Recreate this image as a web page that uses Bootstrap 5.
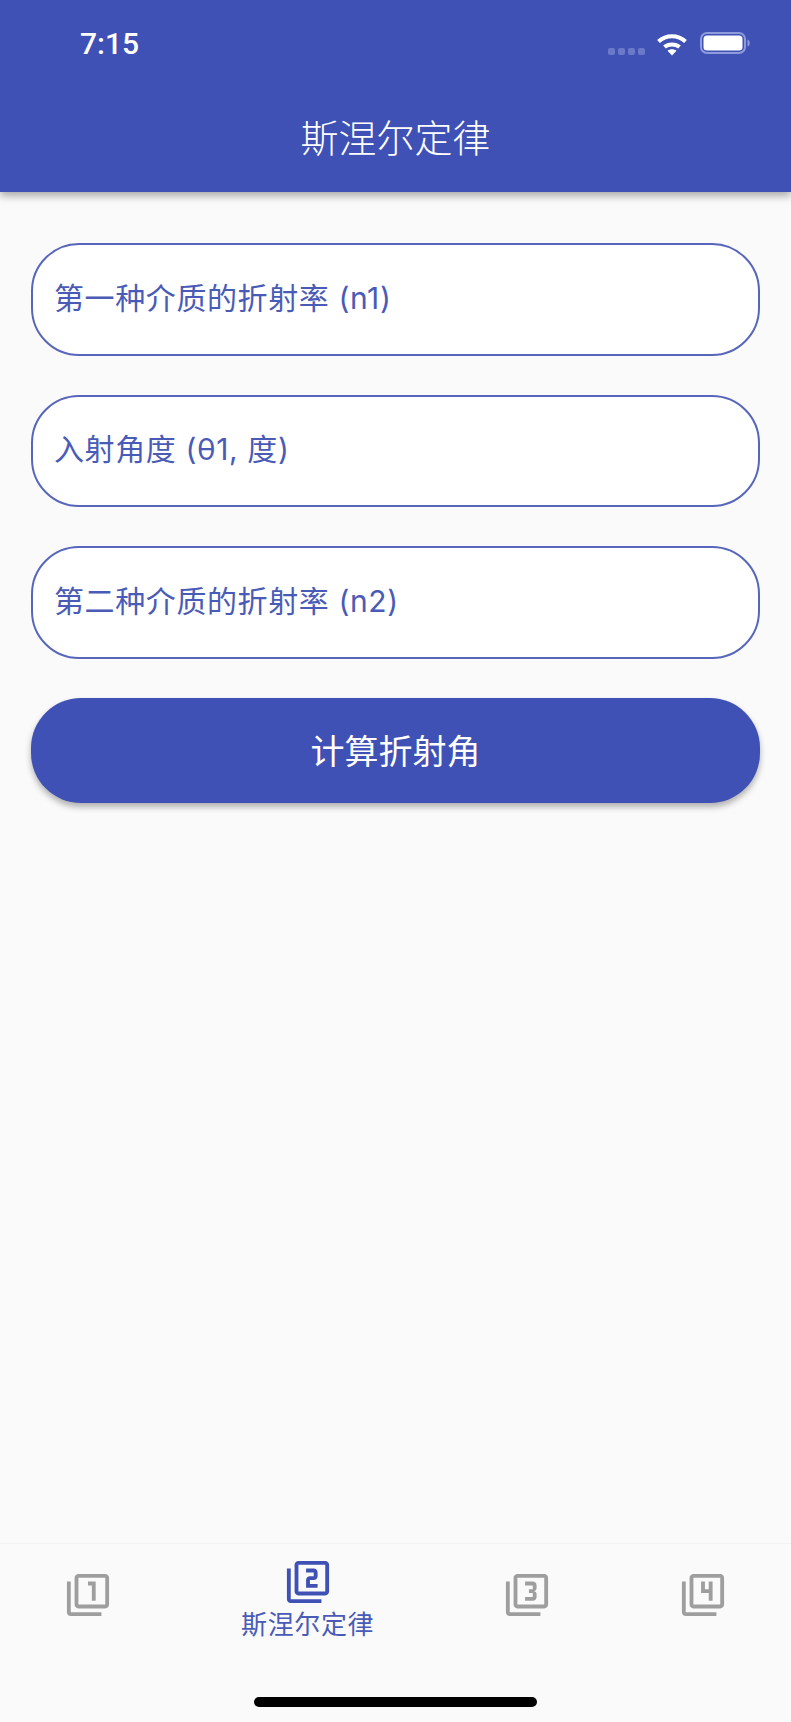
<!DOCTYPE html>
<html lang="zh-CN">
<head>
    <meta charset="UTF-8">
    <title>斯涅尔定律</title>
    <link href="https://cdn.jsdelivr.net/npm/bootstrap@5.3.3/dist/css/bootstrap.min.css" rel="stylesheet">
    <style>
        body { background: #fafafa; font-family: "Inter", "Noto Sans CJK SC", sans-serif; }
        .app-shell { height: 1722px; overflow: hidden; }
        .app-header { height: 192px; background: #3f51b5; box-shadow: 0 4px 8px rgba(0,0,0,.32); padding-top: 27px; }
        .status-row { height: 34px; padding: 0 41px 0 80px; }
        .status-time { font-family: "Roboto", sans-serif; font-size: 30px; font-weight: 500; line-height: 34px; }
        .status-icon { margin-top: 5px; }
        .signal-dots { gap: 3px; margin: 21px 11px 0 0; }
        .signal-dots i { width: 7px; height: 7px; border-radius: 2px; background: #6a79c8; display: block; }
        .app-title { font-size: 38px; line-height: 46px; margin-top: 54px; font-weight: 300; }
        .form-area { padding: 51px 31px 0; gap: 39px; }
        .law-input.form-control { height: 112.5px; border: 2px solid #5766bb; border-radius: 48px; padding: 0 22px 3px 21px; font-size: 30px; letter-spacing: .6px; background: #fff; color: #3f51b5; }
        .law-input.form-control::placeholder { color: #4a5bb7; opacity: 1; }
        .law-btn.btn { height: 105px; border-radius: 50px; background: #3f51b5; border: 0; padding-top: 8px; color: #fff; font-size: 34px; box-shadow: 0 4px 6px rgba(0,0,0,.3); }
        .tab-bar { height: 179px; border-top: 1px solid #f3f3f3; background: #fafafa; position: relative; }
        .tab-item { flex: 2 1 0; color: #9e9e9e; padding-top: 28px; }
        .tab-item.tab-on { flex: 3 1 0; color: #3f51b5; padding-top: 15px; }
        .tab-item svg { width: 46px; height: 46px; fill: currentColor; display: block; }
        .tab-label { font-size: 26px; line-height: 28px; margin-top: 6px; letter-spacing: .6px; color: #4a5bb7; }
        .home-bar { position: absolute; left: 254px; bottom: 15px; width: 283px; height: 10px; border-radius: 5px; background: #000; }
    </style>
</head>
<body>
<div class="app-shell d-flex flex-column">

    <!-- Barra superior -->
    <header class="app-header text-white">
        <div class="status-row d-flex align-items-start">
            <span class="status-time">7:15</span>
            <div class="signal-dots d-flex ms-auto"><i></i><i></i><i></i><i></i></div>
            <svg width="32" height="24" viewBox="0 0 32 24" class="status-icon me-2" fill="none" stroke="#fff" stroke-width="4">
                <path d="M2.5 9.5C10 2.5 22 2.5 29.5 9.5"/>
                <path d="M8.5 15C12.5 11.5 19.5 11.5 23.500 15"/>
                <path d="M16 23.500l-4.500-4.700c2.500-2 6.500-2 9 0z" fill="#fff" stroke="none"/>
            </svg>
            <svg width="50" height="22" viewBox="0 0 50 22" class="status-icon ms-1">
                <rect x="1" y="1" width="44" height="20" rx="6" fill="none" stroke="#8f9bdb" stroke-width="2"/>
                <rect x="3.500" y="3.500" width="39" height="15" rx="3.500" fill="#fff"/>
                <path d="M47.500 7.500c1.500.5 2.300 2 2.300 3.500s-.8 3-2.300 3.500z" fill="#8f9bdb"/>
            </svg>
        </div>
        <div class="app-title text-center">斯涅尔定律</div>
    </header>

    <!-- Formulario -->
    <main class="form-area d-flex flex-column flex-grow-1">
        <input type="text" class="form-control law-input" placeholder="第一种介质的折射率 (n1)">
        <input type="text" class="form-control law-input" placeholder="入射角度 (θ1, 度)">
        <input type="text" class="form-control law-input" placeholder="第二种介质的折射率 (n2)">
        <button type="button" class="btn law-btn">计算折射角</button>
    </main>

    <!-- Pestañas -->
    <nav class="tab-bar d-flex">
        <div class="tab-item d-flex flex-column align-items-center">
            <svg viewBox="0 0 24 24"><path d="M3 5H1v16c0 1.1.9 2 2 2h16v-2H3V5zm11 10h2V5h-4v2h2v8zm7-14H7c-1.1 0-2 .9-2 2v14c0 1.1.9 2 2 2h14c1.1 0 2-.9 2-2V3c0-1.1-.9-2-2-2zm0 16H7V3h14v14z"/></svg>
        </div>
        <div class="tab-item tab-on d-flex flex-column align-items-center">
            <svg viewBox="0 0 24 24"><path d="M3 5H1v16c0 1.1.9 2 2 2h16v-2H3V5zm18-4H7c-1.1 0-2 .9-2 2v14c0 1.1.9 2 2 2h14c1.1 0 2-.9 2-2V3c0-1.1-.9-2-2-2zm0 16H7V3h14v14zm-4-4h-4v-2h2c1.1 0 2-.89 2-2V7c0-1.11-.9-2-2-2h-4v2h4v2h-2c-1.1 0-2 .89-2 2v4h6v-2z"/></svg>
            <span class="tab-label">斯涅尔定律</span>
        </div>
        <div class="tab-item d-flex flex-column align-items-center">
            <svg viewBox="0 0 24 24"><path d="M21 1H7c-1.1 0-2 .9-2 2v14c0 1.1.9 2 2 2h14c1.1 0 2-.9 2-2V3c0-1.1-.9-2-2-2zm0 16H7V3h14v14zM3 5H1v16c0 1.1.9 2 2 2h16v-2H3V5zm14 8v-1.500c0-.83-.67-1.500-1.500-1.500.83 0 1.500-.67 1.500-1.500V7c0-1.110-.9-2-2-2h-4v2h4v2h-2v2h2v2h-4v2h4c1.100 0 2-.89 2-2z"/></svg>
        </div>
        <div class="tab-item d-flex flex-column align-items-center">
            <svg viewBox="0 0 24 24"><path d="M3 5H1v16c0 1.1.9 2 2 2h16v-2H3V5zm12 10h2V5h-2v4h-2V5h-2v6h4v4zm6-14H7c-1.1 0-2 .9-2 2v14c0 1.1.9 2 2 2h14c1.1 0 2-.9 2-2V3c0-1.1-.9-2-2-2zm0 16H7V3h14v14z"/></svg>
        </div>
        <div class="home-bar"></div>
    </nav>
</div>
<script src="https://cdn.jsdelivr.net/npm/bootstrap@5.3.3/dist/js/bootstrap.bundle.min.js"></script>
</body>
</html>
